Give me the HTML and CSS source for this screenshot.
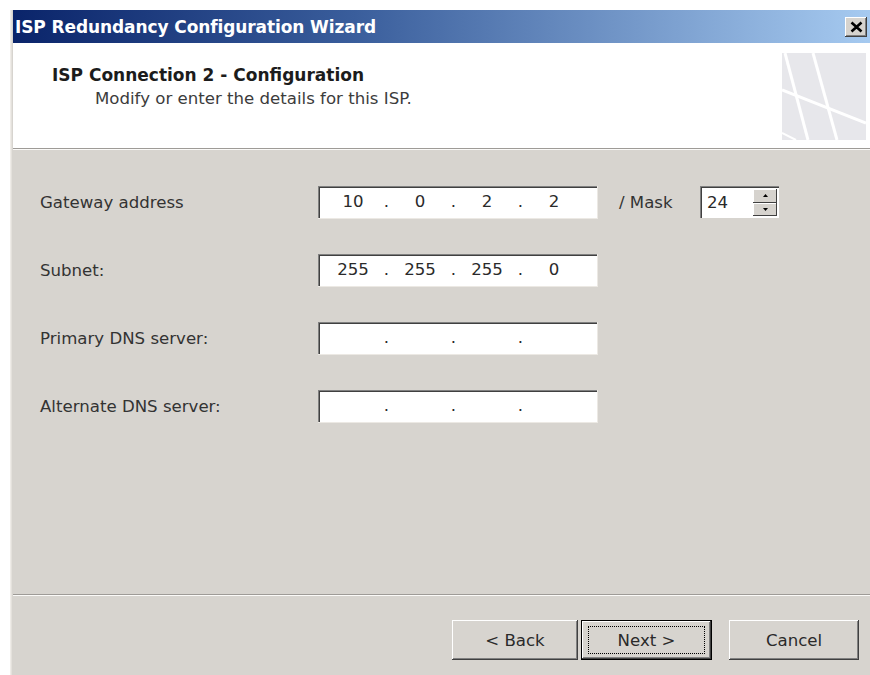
FILE: index.html
```html
<!DOCTYPE html>
<html lang="en">
<head>
<meta charset="utf-8">
<title>ISP Redundancy Configuration Wizard</title>
<link rel="stylesheet" href="styles.css">
</head>
<body>
<div class="window">
  <div class="titlebar">
    <span class="title">ISP Redundancy Configuration Wizard</span>
    <span class="close">
      <svg width="13" height="12" viewBox="0 0 13 12"><path d="M1.5 1.5 L11.5 10.5 M11.5 1.5 L1.5 10.5" stroke="#000" stroke-width="2.6"/></svg>
    </span>
  </div>

  <div class="header">
    <div class="htext">
      <div class="htitle">ISP Connection 2 - Configuration</div>
      <div class="hsub">Modify or enter the details for this ISP.</div>
    </div>
    <svg class="logo" width="84" height="87" viewBox="0 0 84 87">
      <rect width="84" height="87" fill="#e7e7eb"/>
      <path d="M3 0 L26 87" stroke="#fff" stroke-width="3"/>
      <path d="M31 0 L55 87" stroke="#fff" stroke-width="3"/>
      <path d="M0 37 L84 70" stroke="#fff" stroke-width="3"/>
      <path d="M0 80 L14 87" stroke="#fff" stroke-width="2"/>
    </svg>
  </div>
  <div class="sep"></div>

  <div class="content">
    <div class="row">
      <label class="lbl">Gateway address</label>
      <div class="ipfield">
        <span class="seg">10</span><span class="dot">.</span><span class="seg">0</span><span class="dot">.</span><span class="seg">2</span><span class="dot">.</span><span class="seg">2</span>
      </div>
      <span class="mask">/ Mask</span>
      <div class="spin">
        <span class="spinval">24</span>
        <span class="spinbtns">
          <span class="sb"><svg width="5" height="3" viewBox="0 0 5 3"><path d="M0 3 L2.5 0 L5 3Z" fill="#000"/></svg></span>
          <span class="sb"><svg width="5" height="3" viewBox="0 0 5 3"><path d="M0 0 L2.5 3 L5 0Z" fill="#000"/></svg></span>
        </span>
      </div>
    </div>
    <div class="row">
      <label class="lbl">Subnet:</label>
      <div class="ipfield">
        <span class="seg">255</span><span class="dot">.</span><span class="seg">255</span><span class="dot">.</span><span class="seg">255</span><span class="dot">.</span><span class="seg">0</span>
      </div>
    </div>
    <div class="row">
      <label class="lbl">Primary DNS server:</label>
      <div class="ipfield">
        <span class="seg"></span><span class="dot">.</span><span class="seg"></span><span class="dot">.</span><span class="seg"></span><span class="dot">.</span><span class="seg"></span>
      </div>
    </div>
    <div class="row">
      <label class="lbl">Alternate DNS server:</label>
      <div class="ipfield">
        <span class="seg"></span><span class="dot">.</span><span class="seg"></span><span class="dot">.</span><span class="seg"></span><span class="dot">.</span><span class="seg"></span>
      </div>
    </div>
  </div>

  <div class="sep"></div>

  <div class="buttons">
    <button class="btn back">&lt; Back</button>
    <button class="btn next"><span class="focus">Next &gt;</span></button>
    <button class="btn cancel">Cancel</button>
  </div>
</div>
</body>
</html>
```

FILE: styles.css
```css
html, body {
  margin: 0;
  padding: 0;
  background: #fff;
}

body {
  padding: 10px 0 0 10px;
  font-family: "DejaVu Sans", Tahoma, sans-serif;
  font-size: 16.6px;
  color: #2a2a2a;
}

.window {
  width: 857px;
  height: 665px;
  padding-left: 3px;
  background: #d7d4cf;
  box-shadow: inset 1px 0 #efece8, inset 2px 0 #e4e1dc;
  display: flex;
  flex-direction: column;
  overflow: hidden;
}

/* caption bar */
.titlebar {
  height: 33px;
  flex: none;
  display: flex;
  align-items: center;
  justify-content: space-between;
  padding: 0 3px 0 2px;
  background: linear-gradient(to right, #0a246a 0%, #3a5e9c 40%, #a6caf0 100%);
}

.title {
  color: #fff;
  font-weight: bold;
  font-size: 17px;
  letter-spacing: -0.1px;
}

.close {
  width: 22px;
  height: 20px;
  background: #d6d3ce;
  box-shadow: inset -1px -1px #404040, inset 1px 1px #fff, inset -2px -2px #808080;
  display: flex;
  align-items: center;
  justify-content: center;
}

/* wizard page header */
.header {
  height: 105px;
  flex: none;
  background: #fff;
  display: flex;
  justify-content: space-between;
  align-items: flex-start;
}

.htext {
  padding: 22px 0 0 39px;
}

.htitle {
  font-weight: bold;
  font-size: 17px;
  color: #1c1c1c;
  line-height: 20px;
}

.hsub {
  margin: 4px 0 0 43px;
  color: #3c3c3c;
  line-height: 20px;
}

.logo {
  margin: 10px 4px 0 0;
}

.sep {
  height: 1px;
  flex: none;
  background: #9e9b97;
  border-bottom: 1px solid #fbfaf8;
}

/* form */
.content {
  flex: 1;
  padding: 35px 0 0 27px;
  display: flex;
  flex-direction: column;
  gap: 34px;
}

.row {
  display: flex;
  align-items: center;
  height: 34px;
}

.lbl {
  width: 278px;
  color: #333;
}

.ipfield {
  width: 273px;
  height: 32px;
  padding: 0 0 0 6px;
  background: #fff;
  box-shadow: inset 1px 1px #808080, inset 2px 2px #404040;
  border-bottom: 1px solid #ece9e4;
  border-right: 1px solid #ece9e4;
  display: flex;
  align-items: center;
}

.seg {
  width: 58px;
  text-align: center;
}

.dot {
  width: 9px;
  text-align: center;
}

.mask {
  margin-left: 21px;
  width: 81px;
  color: #333;
}

.spin {
  width: 79px;
  height: 32px;
  background: #fff;
  box-shadow: inset 1px 1px #808080, inset 2px 2px #404040;
  display: flex;
  align-items: stretch;
}

.spinval {
  flex: 1;
  padding: 0 0 0 7px;
  display: flex;
  align-items: center;
}

.spinbtns {
  width: 24px;
  padding: 3px 2px 2px 0;
  display: flex;
  flex-direction: column;
}

.sb {
  flex: 1;
  background: #d6d3ce;
  box-shadow: inset -1px -1px #404040, inset 1px 1px #fff;
  display: flex;
  align-items: center;
  justify-content: center;
}

/* navigation buttons */
.buttons {
  height: 55px;
  flex: none;
  display: flex;
  align-items: flex-start;
  padding: 24px 0 0 439px;
}

.btn {
  height: 40px;
  font-family: inherit;
  font-size: 16.6px;
  color: #2a2a2a;
  background: #d7d4cf;
  border: none;
  box-shadow: inset -1px -1px #404040, inset 1px 1px #fff, inset -2px -2px #808080;
  padding: 0;
}

.back {
  width: 126px;
}

.next {
  width: 131px;
  margin-left: 3px;
  box-shadow: inset 0 0 0 1px #000, inset -2px -2px #404040, inset 2px 2px #fff, inset -3px -3px #808080;
  display: flex;
  align-items: center;
  justify-content: center;
}

.focus {
  width: 117px;
  height: 28px;
  border: 1px dotted #000;
  box-sizing: border-box;
  display: flex;
  align-items: center;
  justify-content: center;
}

.cancel {
  width: 130px;
  margin-left: 17px;
}
```
